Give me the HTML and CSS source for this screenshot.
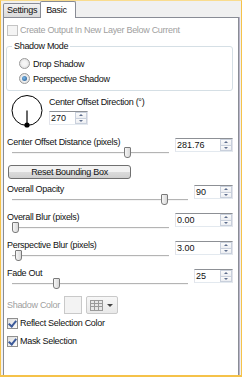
FILE: index.html
```html
<!DOCTYPE html>
<html lang="en">
<head>
  <meta charset="UTF-8" />
  <title>Shadow</title>
  <link rel="stylesheet" href="styles.css">
</head>
<body>
  <div class="window">
    <div class="tabs">
      <div class="tab">Settings</div>
      <div class="tab active">Basic</div>
    </div>

    <div class="page">
      <div class="check disabled"><span class="box"></span>Create Output In New Layer Below Current</div>

      <fieldset class="group">
        <legend>Shadow Mode</legend>
        <div class="radio"><span class="dot"></span>Drop Shadow</div>
        <div class="radio selected"><span class="dot"></span>Perspective Shadow</div>
      </fieldset>

      <div class="dial-row">
        <svg class="dial" width="34" height="36" viewBox="0 0 34 36">
          <circle cx="17" cy="17.5" r="15" fill="none" stroke="#000" stroke-width="1" />
          <line x1="17" y1="17.5" x2="17" y2="32" stroke="#000" stroke-width="1.2" />
          <circle cx="17" cy="32" r="2.6" fill="#000" />
        </svg>
        <div class="dial-side">
          <div class="label">Center Offset Direction (°)</div>
          <div class="spin narrow"><span class="value">270</span><span class="arrows"><i class="up"></i><i class="down"></i></span></div>
        </div>
      </div>

      <div class="field">
        <div class="field-main">
          <div class="label">Center Offset Distance (pixels)</div>
          <div class="slider"><span class="thumb" style="left:112px"></span></div>
        </div>
        <div class="spin wide"><span class="value">281.76</span><span class="arrows"><i class="up"></i><i class="down"></i></span></div>
      </div>

      <button class="btn">Reset Bounding Box</button>

      <div class="field">
        <div class="field-main">
          <div class="label">Overall Opacity</div>
          <div class="slider"><span class="thumb" style="left:149px"></span></div>
        </div>
        <div class="spin narrow"><span class="value">90</span><span class="arrows"><i class="up"></i><i class="down"></i></span></div>
      </div>

      <div class="field">
        <div class="field-main">
          <div class="label">Overall Blur (pixels)</div>
          <div class="slider"><span class="thumb" style="left:0px"></span></div>
        </div>
        <div class="spin wide"><span class="value">0.00</span><span class="arrows"><i class="up"></i><i class="down"></i></span></div>
      </div>

      <div class="field">
        <div class="field-main">
          <div class="label">Perspective Blur (pixels)</div>
          <div class="slider"><span class="thumb" style="left:3px"></span></div>
        </div>
        <div class="spin wide"><span class="value">3.00</span><span class="arrows"><i class="up"></i><i class="down"></i></span></div>
      </div>

      <div class="field">
        <div class="field-main">
          <div class="label">Fade Out</div>
          <div class="slider"><span class="thumb" style="left:41px"></span></div>
        </div>
        <div class="spin narrow"><span class="value">25</span><span class="arrows"><i class="up"></i><i class="down"></i></span></div>
      </div>

      <div class="color-row">
        <span class="label disabled-text">Shadow Color</span>
        <span class="swatch"></span>
        <span class="palette">
          <svg width="13" height="11" viewBox="0 0 13 11">
            <rect x="0" y="0" width="13" height="11" fill="#9a9a9a" />
            <rect x="1" y="1" width="3" height="2" fill="#e8e8e8" />
            <rect x="5" y="1" width="3" height="2" fill="#e8e8e8" />
            <rect x="9" y="1" width="3" height="2" fill="#e8e8e8" />
            <rect x="1" y="4" width="3" height="2" fill="#e8e8e8" />
            <rect x="5" y="4" width="3" height="2" fill="#e8e8e8" />
            <rect x="9" y="4" width="3" height="2" fill="#e8e8e8" />
            <rect x="1" y="7" width="3" height="3" fill="#e8e8e8" />
            <rect x="5" y="7" width="3" height="3" fill="#e8e8e8" />
            <rect x="9" y="7" width="3" height="3" fill="#e8e8e8" />
          </svg>
          <span class="caret"></span>
        </span>
      </div>

      <div class="check checked"><span class="box"></span>Reflect Selection Color</div>
      <div class="check checked"><span class="box"></span>Mask Selection</div>
    </div>
  </div>
</body>
</html>
```

FILE: styles.css
```css
body {
  margin: 0;
  font-family: "Liberation Sans", Arial, sans-serif;
  font-size: 9px;
  letter-spacing: -0.3px;
  color: #111;
}

.window {
  width: 242px;
  height: 377px;
  box-sizing: border-box;
  display: flex;
  flex-direction: column;
  background: #f0f0f0;
  border-top: 1px solid #f9dc8e;
  border-left: 1px solid #f5c24a;
  border-right: 1px solid #f5c24a;
  border-bottom: 2px solid #f5c24a;
  padding: 0 2px 0 2px;
}

/* tabs */
.tabs {
  display: flex;
  height: 16px;
  align-items: flex-end;
}

.tab {
  height: 13px;
  line-height: 13px;
  padding: 0 3px;
  border: 1px solid #898c95;
  border-bottom: none;
  background: linear-gradient(#f2f2f2, #dadada);
  border-radius: 2px 2px 0 0;
}

.tab.active {
  height: 16px;
  line-height: 16px;
  margin-left: -1px;
  margin-bottom: -1px;
  padding: 0 8px 0 5px;
  background: #fff;
  position: relative;
  z-index: 1;
}

.page {
  flex: 1;
  background: #fff;
  border: 1px solid #898c95;
  border-bottom: none;
  box-shadow: 1px 0 0 #b9b5c9;
  padding: 6px 5px 0 3px;
}

.label {
  line-height: 10px;
  height: 10px;
  white-space: nowrap;
}

.disabled-text {
  color: #a0a0a0;
}

/* checkboxes */
.check {
  display: flex;
  align-items: center;
  height: 12px;
  gap: 2px;
  margin-bottom: 6px;
}

.check .box {
  width: 9px;
  height: 9px;
  border: 1px solid #8f8f8f;
  background: linear-gradient(135deg, #dedede, #fbfbfb);
  position: relative;
}

.check.disabled {
  color: #a0a0a0;
}

.check.disabled .box {
  border-color: #c4c4c4;
  background: #f4f4f4;
}

.check.checked .box::after {
  content: "";
  position: absolute;
  left: 2px;
  top: 0px;
  width: 3px;
  height: 6px;
  border-right: 2px solid #3c5a9a;
  border-bottom: 2px solid #3c5a9a;
  transform: rotate(40deg);
}

/* group box */
.group {
  margin: -1px 0 0 -1px;
  padding: 5px 0 4px 12px;
  border: 1px solid #d5dfe5;
  border-radius: 3px;
}

.group legend {
  margin-left: -7px;
  padding: 0 2px;
  line-height: 10px;
}

.radio {
  display: flex;
  align-items: center;
  height: 15px;
  gap: 3px;
}

.radio .dot {
  width: 9px;
  height: 9px;
  border: 1px solid #9a9a9a;
  border-radius: 50%;
  background: radial-gradient(circle, #f6f6f6 30%, #d6d6d6 100%);
  position: relative;
}

.radio.selected .dot::after {
  content: "";
  position: absolute;
  left: 2px;
  top: 2px;
  width: 5px;
  height: 5px;
  border-radius: 50%;
  background: radial-gradient(circle at 40% 40%, #7ab8e8, #1d4f86);
}

/* dial */
.dial-row {
  display: flex;
  margin-top: 2px;
}

.dial {
  display: block;
  margin-left: 3px;
}

.dial-side {
  margin-left: 5px;
  padding-top: 4px;
}

.dial-side .spin {
  margin-top: 4px;
}

/* slider rows */
.field {
  display: flex;
  align-items: flex-start;
  margin-bottom: 6px;
}

.dial-row + .field {
  margin-top: 8px;
}

.field-main {
  flex: 1;
}

.slider {
  height: 12px;
  margin: 0 6px 0 5px;
  position: relative;
}

.slider::before {
  content: "";
  position: absolute;
  left: 0;
  right: 0;
  top: 5px;
  height: 1px;
  background: #b4b4b4;
  box-shadow: 0 1px 0 #f4f4f4;
}

.thumb {
  position: absolute;
  top: 0;
  width: 5px;
  height: 9px;
  border: 1px solid #7a7a7a;
  border-radius: 1px 1px 3px 3px;
  background: linear-gradient(90deg, #f6f6f6, #d8d8d8);
}

/* spin boxes */
.spin {
  display: flex;
  height: 14px;
  margin-top: 1px;
  box-sizing: border-box;
  border: 1px solid #abadb3;
  border-color: #8d9095 #e2e3ea #e3e9ef #e2e3ea;
  background: #fff;
}

.spin.narrow {
  width: 39px;
}

.spin.wide {
  width: 58px;
}

.spin .value {
  flex: 1;
  line-height: 12px;
  padding-left: 1px;
  letter-spacing: 0;
}

.spin .arrows {
  display: flex;
  flex-direction: column;
  width: 12px;
}

.spin i {
  flex: 1;
  border: 1px solid #c9d0dc;
  background: linear-gradient(#fbfbfb, #eceef2);
  position: relative;
}

.spin i.up {
  border-bottom-width: 0;
}

.spin i::after {
  content: "";
  position: absolute;
  left: 3px;
  top: 1px;
  border-left: 2px solid transparent;
  border-right: 2px solid transparent;
}

.spin i.up::after {
  border-bottom: 2px solid #5f6f8e;
}

.spin i.down::after {
  border-top: 2px solid #5f6f8e;
}

/* button */
.btn {
  display: block;
  width: 123px;
  height: 14px;
  margin: 2px 0 5px 1px;
  padding: 0;
  font: inherit;
  letter-spacing: -0.3px;
  color: #111;
  border: 1px solid #707070;
  border-radius: 3px;
  background: linear-gradient(#f2f2f2 50%, #dcdcdc 50%, #cfcfcf);
}

/* shadow color */
.color-row {
  display: flex;
  align-items: center;
  height: 18px;
  margin: 1px 0 3px;
}

.color-row .label {
  width: 57px;
}

.swatch {
  width: 16px;
  height: 16px;
  border: 1px solid #c9c9c9;
  background: #f3f3f3;
}

.palette {
  display: flex;
  align-items: center;
  gap: 4px;
  margin-left: 4px;
  width: 29px;
  height: 16px;
  padding-left: 3px;
  box-sizing: border-box;
  width: 32px;
  height: 18px;
  border: 1px solid #c9c9c9;
  border-radius: 2px;
  background: linear-gradient(#f7f7f7, #e9e9e9);
}

.caret {
  border-left: 3px solid transparent;
  border-right: 3px solid transparent;
  border-top: 3px solid #444;
}
```
